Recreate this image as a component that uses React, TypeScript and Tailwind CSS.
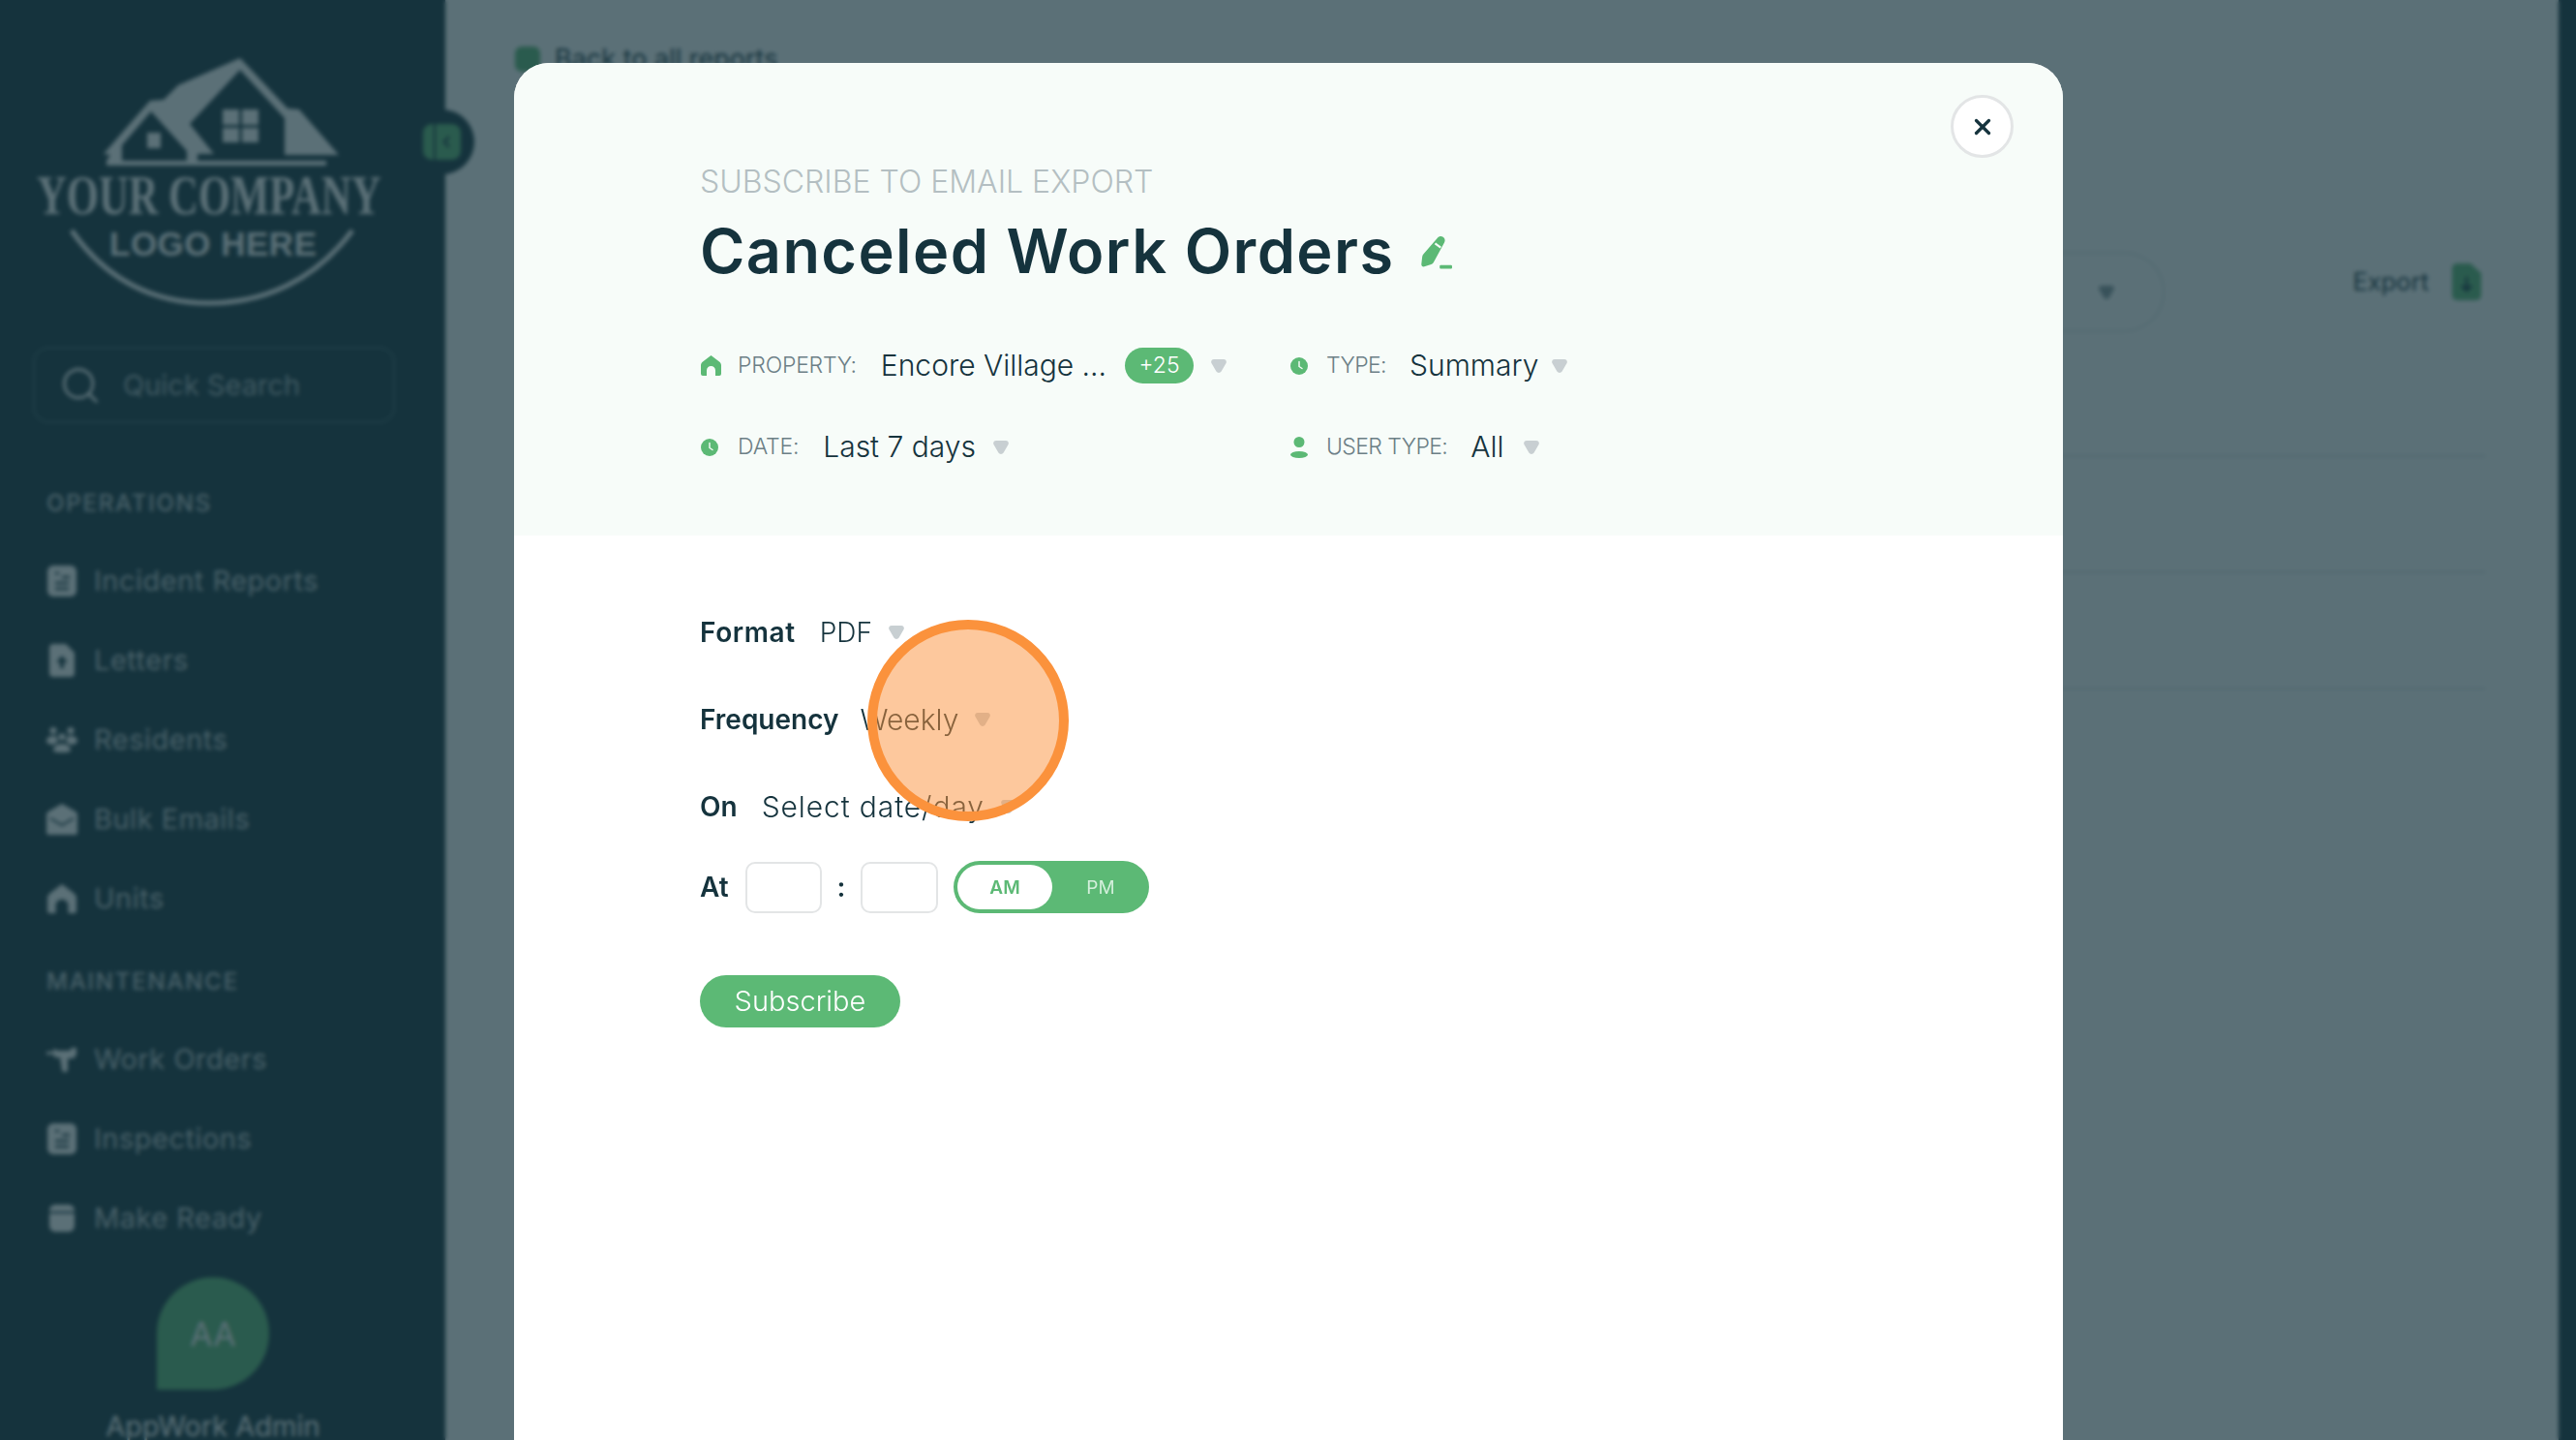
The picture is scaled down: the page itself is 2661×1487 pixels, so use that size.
import { Search, X } from "lucide-react";

const font = "font-['Inter','Liberation_Sans',sans-serif]";

function Caret({ className = "" }: { className?: string }) {
  return (
    <svg viewBox="0 0 16 14" className={`h-[14px] w-[16px] shrink-0 ${className}`} fill="currentColor">
      <path d="M3 0h10c2.400 0 3.600 2.400 2.400 4.300L10.600 12.500c-1.200 1.900-4 1.900-5.200 0L.6 4.300C-.6 2.400.6 0 3 0z" />
    </svg>
  );
}

function HomeIcon({ className = "" }: { className?: string }) {
  return (
    <svg viewBox="0 0 21 21" className={className} fill="currentColor">
      <path d="M10.500 0 19 6.500c1.300 1 2 2.200 2 3.800V19a2 2 0 0 1-2 2h-4v-5.500a4.500 4.500 0 0 0-9 0V21H2a2 2 0 0 1-2-2v-8.700c0-1.600.7-2.800 2-3.800z" />
    </svg>
  );
}

function ClockIcon({ className = "" }: { className?: string }) {
  return (
    <svg viewBox="0 0 18 18" className={className}>
      <circle cx="9" cy="9" r="9" fill="currentColor" />
      <path d="M9 4.500V9.500L12 11.500" stroke="#f7fcf9" strokeWidth="1.400" fill="none" strokeLinecap="round" />
    </svg>
  );
}

function UserIcon({ className = "" }: { className?: string }) {
  return (
    <svg viewBox="0 0 18 22" className={className} fill="currentColor">
      <circle cx="9" cy="5.500" r="5.500" />
      <ellipse cx="9" cy="18.500" rx="9" ry="3.500" />
    </svg>
  );
}

function PencilIcon() {
  return (
    <svg viewBox="0 0 31 32" className="ml-[27px] h-[34px] w-[33px] shrink-0 text-[#5cb975]" fill="currentColor">
      <path d="M17 1.500c1.400-1.600 3.600-1.900 5.300-.7s2.300 3.400 1.200 5.200L13 25.500c-.5.9-1.300 1.500-2.300 1.800L4 29.500c-1.600.5-3-.8-2.800-2.400l.8-7c.1-1 .5-1.900 1.100-2.600z" />
      <path d="M14.500 7l5.500 4" stroke="#f7fcf9" strokeWidth="2" />
      <rect x="19" y="28" width="12" height="3.500" rx="1" />
    </svg>
  );
}

function Meta({
  icon,
  label,
  value,
  badge,
  tight,
  caretGap = "ml-[18px]",
}: {
  icon: React.ReactNode;
  label: string;
  value: string;
  badge?: string;
  tight?: boolean;
  caretGap?: string;
}) {
  return (
    <div className="flex items-center">
      <div className={`flex shrink-0 items-center ${tight ? "w-[37px]" : "w-[38px]"}`}>{icon}</div>
      <span className={`text-[23px] font-light text-[#6c7f86] ${tight ? "tracking-[-0.6px]" : "tracking-[-0.2px]"}`}>{label}</span>
      <span className={`text-[30px] font-light text-[#15333d] ${tight ? "ml-[24px]" : "ml-[25px]"}`}>{value}</span>
      {badge && (
        <span className="ml-[19px] flex h-[37px] w-[71px] items-center justify-center rounded-full bg-[#5cb975] text-[23px] font-light text-white">
          {badge}
        </span>
      )}
      <Caret className={`text-[#c8cfd2] ${caretGap}`} />
    </div>
  );
}

function FormRow({
  label,
  value,
  labelClass = "",
  valueClass = "",
}: {
  label: string;
  value: string;
  labelClass?: string;
  valueClass?: string;
}) {
  return (
    <div className="flex h-[40px] items-center">
      <span className={`text-[28px] font-semibold text-[#15333d] ${labelClass}`}>{label}</span>
      <span className={`font-light text-[#15333d] ${valueClass}`}>{value}</span>
      <Caret className="ml-[17px] text-[#c8cfd2]" />
    </div>
  );
}

function ReportIcon() {
  return (
    <svg viewBox="0 0 30 32" className="h-[32px] w-[30px]" fill="currentColor">
      <path d="M6 0h18a6 6 0 0 1 6 6v20a6 6 0 0 1-6 6H6a6 6 0 0 1-6-6V6a6 6 0 0 1 6-6z" />
      <path d="M8 8h4M15 12h8M8 18h14M8 24h14" stroke="#15333d" strokeWidth="2.400" />
    </svg>
  );
}

function LetterIcon() {
  return (
    <svg viewBox="0 0 26 34" className="h-[34px] w-[26px]" fill="currentColor">
      <path d="M4 0h13l9 9v21a4 4 0 0 1-4 4H4a4 4 0 0 1-4-4V4a4 4 0 0 1 4-4z" />
      <path d="M13 12l6 7h-4v6h-4v-6H7z" fill="#15333d" />
    </svg>
  );
}

function ResidentsIcon() {
  return (
    <svg viewBox="0 0 32 26" className="h-[26px] w-[32px]" fill="currentColor">
      <circle cx="7" cy="3.500" r="3.500" />
      <circle cx="25" cy="3.500" r="3.500" />
      <circle cx="16" cy="10" r="3.500" />
      <path d="M0 14c0-3 3-5 7-5 1.500 0 3 .3 4 1-.6 2 .3 4 1.500 5-2 .6-3.500 1.600-4.500 3C3 18 0 16.500 0 14zM32 14c0-3-3-5-7-5-1.500 0-3 .3-4 1 .6 2-.3 4-1.500 5 2 .6 3.500 1.600 4.500 3 5 0 8-1.500 8-4z" />
      <path d="M7 24c0-4 4-7 9-7s9 3 9 7c0 1.500-4 2-9 2s-9-.5-9-2z" />
    </svg>
  );
}

function MailIcon() {
  return (
    <svg viewBox="0 0 32 32" className="h-[32px] w-[32px]" fill="currentColor">
      <path d="M16 0l14 8c1.300.8 2 1.800 2 3.400V30a2 2 0 0 1-2 2H2a2 2 0 0 1-2-2V11.400C0 9.800.7 8.800 2 8z" />
      <path d="M4 15l12 7 12-7" stroke="#15333d" strokeWidth="2" fill="none" />
    </svg>
  );
}

function DrillIcon() {
  return (
    <svg viewBox="0 0 32 26" className="h-[26px] w-[32px]" fill="currentColor">
      <path d="M0 5h7V2l5 2h12l2-3h5v7l-3 4h-6v12a2 2 0 0 1-2 2h-2a2 2 0 0 1-2-2l-2-13H8V8H0z" />
    </svg>
  );
}

function CalendarIcon() {
  return (
    <svg viewBox="0 0 26 28" className="h-[28px] w-[26px]" fill="currentColor">
      <path d="M6 0h14a6 6 0 0 1 6 6v16a6 6 0 0 1-6 6H6a6 6 0 0 1-6-6V6a6 6 0 0 1 6-6z" />
      <path d="M0 8h26" stroke="#15333d" strokeWidth="2" />
    </svg>
  );
}

function NavItem({ icon, label }: { icon: React.ReactNode; label: string }) {
  return (
    <div className="flex h-[82px] items-center">
      <div className="flex w-[49px] shrink-0 justify-center pr-[17px] text-white">{icon}</div>
      <span className="text-[29px] tracking-[0.5px] text-[#c2ccd0]">{label}</span>
    </div>
  );
}

function Logo() {
  return (
    <svg viewBox="36 55 360 265" className="ml-[36px] mt-[55px] h-[265px] w-[360px] shrink-0 text-white" fill="currentColor">
      <path d="M107 159L155 104L169 103L184 88L248 60L297 112L309 113L350 160L294 160L294 122L248 72L196 128L221 159L204 159L204 166L193 166L193 156L156 115L126 150L126 166L110 166L114 160Z" />
      <rect x="110" y="166" width="227" height="5" />
      <rect x="152" y="137" width="14" height="16" />
      <rect x="230" y="113" width="17" height="16" />
      <rect x="250" y="113" width="17" height="16" />
      <rect x="230" y="132" width="17" height="15" />
      <rect x="250" y="132" width="17" height="15" />
      <g transform="translate(38 221) scale(0.735 1)">
        <text fontFamily="'Liberation Serif', serif" fontWeight="700" fontSize="58">
          YOUR COMPANY
        </text>
      </g>
      <text
        x="113"
        y="264"
        textLength="214"
        lengthAdjust="spacing"
        fontFamily="'Liberation Sans', sans-serif"
        fontWeight="700"
        fontSize="35"
      >
        LOGO HERE
      </text>
      <path d="M74 238C110 290 160 313 216 313S325 290 364 238" fill="none" stroke="currentColor" strokeWidth="5" />
    </svg>
  );
}

function Sidebar() {
  return (
    <aside className="relative flex h-full w-[460px] shrink-0 flex-col bg-[#15333d]">
      <Logo />
      <div className="ml-[34px] mt-[38px] flex h-[79px] w-[374px] shrink-0 items-center rounded-[16px] border-2 border-[#3b5a63]">
        <Search className="ml-[25px] h-[44px] w-[44px] text-white" strokeWidth={1.6} />
        <span className="ml-[22px] text-[29px] text-[#a3b2b7]">Quick Search</span>
      </div>
      <div className="ml-[48px] flex flex-col">
        <div className="mt-[68px] flex h-[30px] items-center text-[24px] font-medium tracking-[1.8px] text-[#c2ccd0]">OPERATIONS</div>
        <div className="mt-[24px] flex flex-col">
          <NavItem icon={<ReportIcon />} label="Incident Reports" />
          <NavItem icon={<LetterIcon />} label="Letters" />
          <NavItem icon={<ResidentsIcon />} label="Residents" />
          <NavItem icon={<MailIcon />} label="Bulk Emails" />
          <NavItem icon={<HomeIcon className="h-[32px] w-[30px]" />} label="Units" />
        </div>
        <div className="mt-[30px] flex h-[30px] items-center text-[24px] font-medium tracking-[1.8px] text-[#c2ccd0]">MAINTENANCE</div>
        <div className="mt-[24px] flex flex-col">
          <NavItem icon={<DrillIcon />} label="Work Orders" />
          <NavItem icon={<ReportIcon />} label="Inspections" />
          <NavItem icon={<CalendarIcon />} label="Make Ready" />
        </div>
      </div>
      <div className="mt-[20px] flex flex-col items-center pr-[20px]">
        <div className="flex h-[116px] w-[116px] items-center justify-center rounded-full rounded-bl-none bg-[#5cb975] text-[34px] text-white">
          AA
        </div>
        <span className="mt-[26px] whitespace-nowrap text-[29px] leading-[24px] text-white">AppWork Admin</span>
      </div>
      <div className="absolute right-[-30px] top-[113px] flex h-[67px] w-[67px] items-center justify-center rounded-full bg-[#15333d]">
        <svg viewBox="0 0 39 37" className="h-[37px] w-[39px]">
          <rect width="39" height="37" rx="9" fill="#5cb975" />
          <path d="M12 0v37" stroke="#15333d" strokeWidth="2" />
          <path d="M27 13l-5 5.500 5 5.500" stroke="#15333d" strokeWidth="2.500" fill="none" />
        </svg>
      </div>
    </aside>
  );
}

function Background() {
  return (
    <main className="flex min-w-0 flex-1 flex-col bg-white pl-[72px] pr-[80px] text-[#15333d]">
      <div className="mt-[48px] flex h-[26px] items-center">
        <div className="h-[26px] w-[26px] rounded-[7px] bg-[#5cb975]" />
        <span className="ml-[15px] text-[27px]">Back to all reports</span>
      </div>
      <div className="mt-[186px] flex items-start">
        <div className="flex h-[83px] w-[1704px] items-center justify-end rounded-full border-2 border-[#e3e7e8] pr-[50px]">
          <div className="mr-[46px] h-full w-[2px] bg-[#e9eced]" />
          <Caret className="text-[#15333d]/50" />
        </div>
        <div className="ml-auto mt-[12px] flex items-center">
          <span className="mr-[24px] text-[25.500px]">Export</span>
          <svg viewBox="0 0 30 38" className="h-[38px] w-[30px]">
            <path d="M5 0h14l11 10v23a5 5 0 0 1-5 5H5a5 5 0 0 1-5-5V5a5 5 0 0 1 5-5z" fill="#5cb975" />
            <path d="M15 14v14M10 23l5 5 5-5" stroke="#15333d" strokeWidth="2.500" fill="none" />
          </svg>
        </div>
      </div>
      <div className="-mr-[5px] h-[129px] shrink-0 border-b-2 border-[#dfe3e5]" />
      <div className="-mr-[5px] h-[120px] shrink-0 border-b-2 border-[#dfe3e5]" />
      <div className="-mr-[5px] h-[120px] shrink-0 border-b-2 border-[#dfe3e5]" />
    </main>
  );
}

function Modal() {
  return (
    <div className={`absolute left-[531px] top-[65px] flex h-[1422px] w-[1600px] flex-col overflow-hidden rounded-t-[36px] bg-white ${font}`}>
      <div className="relative flex h-[488px] shrink-0 flex-col bg-[#f7fcf9] pl-[192px]">
        <button className="absolute right-[51px] top-[33px] flex h-[65px] w-[65px] items-center justify-center rounded-full border-[3px] border-[#e3e5e6] bg-white">
          <X className="h-[26px] w-[26px] text-[#15333d]" strokeWidth={3} />
        </button>
        <div className="mt-[104px] text-[32px] font-light leading-[38px] text-[#b4bfc2]">SUBSCRIBE TO EMAIL EXPORT</div>
        <div className="mt-[13px] flex items-start">
          <h1 className="text-[63px] font-semibold leading-[78px] tracking-[1.4px] text-[#15333d]">Canceled Work Orders</h1>
          <div className="mt-[24px]">
            <PencilIcon />
          </div>
        </div>
        <div className="ml-[1px] mt-[57px] grid grid-cols-[609px_1fr] gap-y-[39px]">
          <Meta icon={<HomeIcon className="h-[21px] w-[21px] text-[#5cb975]" />} label="PROPERTY:" value="Encore Village ..." badge="+25" />
          <Meta icon={<ClockIcon className="h-[18px] w-[18px] text-[#5cb975]" />} label="TYPE:" value="Summary" tight caretGap="ml-[14px]" />
          <Meta icon={<ClockIcon className="h-[18px] w-[18px] text-[#5cb975]" />} label="DATE:" value="Last 7 days" />
          <Meta icon={<UserIcon className="h-[22px] w-[18px] text-[#5cb975]" />} label="USER TYPE:" value="All" tight caretGap="ml-[21px]" />
        </div>
      </div>
      <div className="flex flex-col gap-[50px] pl-[192px] pt-[80px]">
        <FormRow label="Format" labelClass="tracking-[0.6px]" value="PDF" valueClass="ml-[25px] text-[28px]" />
        <FormRow label="Frequency" value="Weekly" valueClass="ml-[22px] text-[30px]" />
        <FormRow label="On" value="Select date/day" valueClass="ml-[25px] text-[30px] tracking-[0.9px]" />
      </div>
      <div className="ml-[192px] mt-[36px] flex items-center">
        <span className="w-[47px] text-[28px] font-semibold text-[#15333d]">At</span>
        <div className="h-[53px] w-[79px] rounded-[10px] border-2 border-[#e3e5e6]" />
        <span className="w-[40px] text-center text-[28px] font-semibold text-[#15333d]">:</span>
        <div className="h-[53px] w-[80px] rounded-[10px] border-2 border-[#e3e5e6]" />
        <div className="ml-[16px] flex h-[54px] w-[202px] items-center rounded-full bg-[#5cb975] pl-[4px] text-[19px] font-semibold">
          <div className="flex h-[46px] w-[98px] items-center justify-center rounded-full bg-white pt-[3px] text-[#5cb975]">AM</div>
          <div className="flex flex-1 items-center justify-center pt-[3px] font-normal text-[#d3efdb]">PM</div>
        </div>
      </div>
      <button className="ml-[192px] mt-[64px] flex h-[54px] w-[207px] items-center justify-center rounded-full bg-[#5cb975] text-[29px] font-light text-white">
        Subscribe
      </button>
    </div>
  );
}

export default function App() {
  return (
    <div className={`relative h-[1487px] w-[2661px] overflow-hidden ${font}`}>
      <div className="flex h-full w-full">
        <Sidebar />
        <Background />
        <div className="h-full w-[18px] shrink-0 bg-[#15333d]" />
      </div>
      <div className="absolute inset-0 bg-[#15333d]/70 backdrop-blur-[2px]" />
      <Modal />
      <div className="absolute left-[896px] top-[640px] h-[208px] w-[208px] rounded-full border-[10px] border-[#fb923c] bg-[#fb923c]/50" />
    </div>
  );
}
